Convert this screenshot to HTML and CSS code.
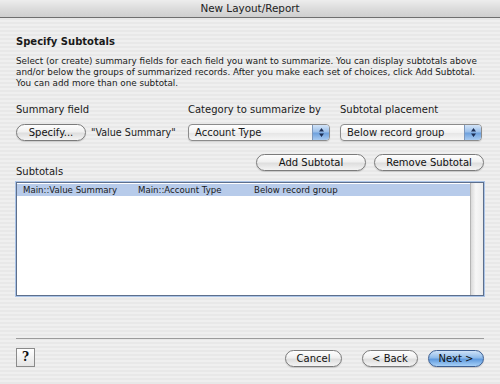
FILE: index.html
```html
<!DOCTYPE html>
<html>
<head>
    <title>New Layout/Report</title>
    <link rel="stylesheet" href="styles.css">
</head>
<body>
    <div class="window">
        <!-- Title bar -->
        <div class="titlebar">New Layout/Report</div>

        <div class="panel">
            <h2 class="heading">Specify Subtotals</h2>
            <p class="intro">Select (or create) summary fields for each field you want to summarize. You can display subtotals above<br>and/or below the groups of summarized records. After you make each set of choices, click Add Subtotal.<br>You can add more than one subtotal.</p>

            <!-- Choices -->
            <div class="choices">
                <div class="choice">
                    <label>Summary field</label>
                    <div class="field-line">
                        <button class="aqua specify">Specify...</button>
                        <span class="field-name">"Value Summary"</span>
                    </div>
                </div>
                <div class="choice">
                    <label>Category to summarize by</label>
                    <div class="popup">
                        <span class="popup-text">Account Type</span>
                        <span class="popup-arrows">
                            <svg width="7" height="11" viewBox="0 0 7 11"><path d="M3.5 1 L6 4.5 L1 4.5 Z M3.5 10 L6 6.5 L1 6.5 Z" fill="#1d2f55"/></svg>
                        </span>
                    </div>
                </div>
                <div class="choice">
                    <label>Subtotal placement</label>
                    <div class="popup">
                        <span class="popup-text">Below record group</span>
                        <span class="popup-arrows">
                            <svg width="7" height="11" viewBox="0 0 7 11"><path d="M3.5 1 L6 4.5 L1 4.5 Z M3.5 10 L6 6.5 L1 6.5 Z" fill="#1d2f55"/></svg>
                        </span>
                    </div>
                </div>
            </div>

            <div class="list-head">
                <span class="list-label">Subtotals</span>
                <div class="list-actions">
                    <button class="aqua wide">Add Subtotal</button>
                    <button class="aqua wide">Remove Subtotal</button>
                </div>
            </div>

            <!-- Subtotal list -->
            <div class="list">
                <div class="list-rows">
                    <div class="list-row selected">
                        <span class="col col-field">Main::Value Summary</span>
                        <span class="col col-category">Main::Account Type</span>
                        <span class="col">Below record group</span>
                    </div>
                </div>
                <div class="list-scroll"></div>
            </div>
        </div>

        <!-- Footer -->
        <div class="footer">
            <button class="help">?</button>
            <div class="nav">
                <button class="aqua nav-btn cancel">Cancel</button>
                <button class="aqua nav-btn">&lt; Back</button>
                <button class="aqua nav-btn default">Next &gt;</button>
            </div>
        </div>
    </div>
</body>
</html>
```

FILE: styles.css
```css
body {
    margin: 0;
    padding: 0;
    font-family: "DejaVu Sans", Verdana, sans-serif;
    color: #1a1a1a;
}

.window {
    width: 500px;
    height: 384px;
    display: flex;
    flex-direction: column;
    background: repeating-linear-gradient(#efefef 0 2px, #e8e8e8 2px 4px);
    overflow: hidden;
}

/* Title bar */
.titlebar {
    height: 17px;
    line-height: 17px;
    text-align: center;
    font-size: 10.4px;
    color: #222;
    background: linear-gradient(#ededed, #dcdcdc 50%, #cfcfcf);
    border-bottom: 1px solid #6f6f6f;
}

.panel {
    padding: 0 16px;
    display: flex;
    flex-direction: column;
}

.heading {
    margin: 18px 0 0;
    font-size: 10px;
    line-height: 12px;
    font-weight: bold;
}

.intro {
    margin: 8px 0 0;
    font-size: 8.8px;
    line-height: 11px;
}

/* Choices */
.choices {
    display: grid;
    grid-template-columns: 162px 142px 142px;
    column-gap: 10px;
    margin-top: 15px;
}

.choice label {
    display: block;
    font-size: 10px;
    line-height: 12px;
    margin-bottom: 8px;
}

.field-line {
    display: flex;
    align-items: center;
    gap: 5px;
}

.field-name {
    font-size: 9.6px;
}

button {
    font-family: inherit;
    color: #111;
    padding: 0;
    cursor: pointer;
}

.aqua {
    height: 17px;
    border: 1px solid #7b7b7b;
    border-radius: 9px;
    font-size: 10px;
    background: linear-gradient(#fefefe, #f0f0f0 45%, #dedede 55%, #f4f4f4);
    box-shadow: 0 1px 1px rgba(0, 0, 0, 0.15);
}

.specify {
    width: 70px;
}

.popup {
    height: 17px;
    box-sizing: border-box;
    border: 1px solid #8c8c8c;
    border-radius: 4px;
    background: linear-gradient(#ffffff, #f2f2f2 50%, #e6e6e6 55%, #f6f6f6);
    display: flex;
    align-items: center;
    justify-content: space-between;
    overflow: hidden;
    box-shadow: 0 1px 1px rgba(0, 0, 0, 0.12);
}

.popup-text {
    font-size: 10px;
    padding-left: 6px;
}

.popup-arrows {
    width: 16px;
    height: 15px;
    display: flex;
    align-items: center;
    justify-content: center;
    background: linear-gradient(#d3e4f8, #9cc0ea 45%, #6fa1dd 55%, #a9cbf1);
    border-left: 1px solid #7d97bb;
}

/* Subtotals list */
.list-head {
    display: flex;
    justify-content: space-between;
    align-items: flex-end;
    margin-top: 13px;
}

.list-label {
    font-size: 10px;
    line-height: 12px;
    margin-bottom: -7px;
}

.list-actions {
    display: flex;
    gap: 8px;
}

.wide {
    width: 110px;
}

.list {
    margin-top: 11px;
    height: 114px;
    box-sizing: border-box;
    border: 1px solid #5d6f8c;
    box-shadow: 0 0 0 1px #aac3e6;
    background: #fff;
    display: flex;
}

.list-rows {
    flex: 1;
    padding-top: 1px;
}

.list-row {
    height: 12px;
    line-height: 12px;
    font-size: 8.6px;
    display: flex;
    padding-left: 6px;
}

.list-row.selected {
    background: #b7cbea;
}

.col-field {
    width: 115px;
}

.col-category {
    width: 116px;
}

.list-scroll {
    width: 12px;
    border-left: 1px solid #b5b5b5;
    background: linear-gradient(90deg, #d9d9d9, #f7f7f7 40%, #ececec);
}

/* Footer */
.footer {
    margin: auto 16px 0;
    margin-top: 42px;
    border-top: 1px solid #9c9c9c;
    padding-top: 9px;
    height: 35px;
    display: flex;
    justify-content: space-between;
    align-items: flex-start;
}

.help {
    width: 19px;
    height: 19px;
    border: 1px solid #8a8a8a;
    background: linear-gradient(#ffffff, #e4e4e4);
    font-family: "DejaVu Serif", serif;
    font-weight: bold;
    font-size: 12px;
    line-height: 17px;
}

.nav {
    display: flex;
    gap: 10px;
    margin-top: 2px;
}

.nav-btn {
    width: 56px;
}

.cancel {
    width: 57px;
    margin-right: 10px;
}

.default {
    border-color: #3e5f92;
    background: linear-gradient(#cfe2f8, #8fbbea 45%, #5f9ade 55%, #a6d0f7);
}
```
